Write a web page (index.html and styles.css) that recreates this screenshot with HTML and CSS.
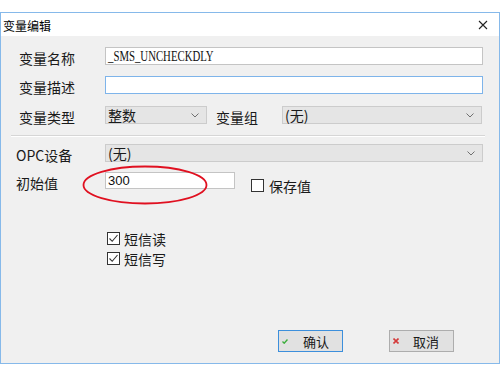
FILE: index.html
```html
<!DOCTYPE html>
<html lang="zh">
<head>
<meta charset="utf-8">
<title>变量编辑</title>
<link rel="stylesheet" href="styles.css">
</head>
<body>
<div class="window">
  <div class="titlebar">
    <span class="title">变量编辑</span>
    <svg class="close" width="10" height="10" viewBox="0 0 10 10"><path d="M1 1 L9 9 M9 1 L1 9" stroke="#222" stroke-width="1.1" fill="none"/></svg>
  </div>
  <div class="body">
    <div class="row r1">
      <span class="label">变量名称</span>
      <div class="input wide serif"><span class="narrow">_SMS_UNCHECKDLY</span></div>
    </div>
    <div class="row r2">
      <span class="label">变量描述</span>
      <div class="input wide focus"></div>
    </div>
    <div class="row r3">
      <span class="label">变量类型</span>
      <div class="combo c-type"><span>整数</span><svg class="chev" width="8" height="5" viewBox="0 0 8 5"><path d="M0.5 0.5 L4 4 L7.5 0.5" stroke="#707070" fill="none"/></svg></div>
      <span class="label-inline">变量组</span>
      <div class="combo c-group"><span>(无)</span><svg class="chev" width="8" height="5" viewBox="0 0 8 5"><path d="M0.5 0.5 L4 4 L7.5 0.5" stroke="#707070" fill="none"/></svg></div>
    </div>
    <div class="sep"></div>
    <div class="row r4">
      <span class="label alt">OPC设备</span>
      <div class="combo wide"><span>(无)</span><svg class="chev" width="8" height="5" viewBox="0 0 8 5"><path d="M0.5 0.5 L4 4 L7.5 0.5" stroke="#707070" fill="none"/></svg></div>
    </div>
    <div class="row r5">
      <span class="label alt">初始值</span>
      <div class="input short sans">300</div>
      <div class="check save"><span class="box"></span><span class="ctext">保存值</span></div>
    </div>
    <div class="checks">
      <div class="check"><span class="box"><svg width="11" height="11" viewBox="0 0 11 11"><path d="M1.5 5.5 L4.2 8.3 L9.5 2" stroke="#333" stroke-width="1.1" fill="none"/></svg></span><span class="ctext">短信读</span></div>
      <div class="check"><span class="box"><svg width="11" height="11" viewBox="0 0 11 11"><path d="M1.5 5.5 L4.2 8.3 L9.5 2" stroke="#333" stroke-width="1.1" fill="none"/></svg></span><span class="ctext">短信写</span></div>
    </div>
    <div class="buttons">
      <div class="btn default"><svg class="bicon" width="6" height="5" viewBox="0 0 6 5"><path d="M0.5 2.5 L2.2 4.2 L5.5 0.5" stroke="#3cae3c" stroke-width="1.4" fill="none"/></svg><span>确认</span></div>
      <div class="btn cancel"><svg class="bicon" width="6" height="6" viewBox="0 0 6 6"><path d="M0.5 0.5 L5.5 5.5 M5.5 0.5 L0.5 5.5" stroke="#d43a3a" stroke-width="1.6" fill="none"/></svg><span>取消</span></div>
    </div>
    <svg class="mark" width="126" height="40" viewBox="0 0 126 40"><ellipse cx="63" cy="20" rx="61.5" ry="18.5" fill="none" stroke="#e01020" stroke-width="1.8"/></svg>
  </div>
</div>
</body>
</html>
```

FILE: styles.css
```css
* { box-sizing: border-box; }
html, body { margin: 0; padding: 0; background: #ffffff; }
body {
  width: 500px;
  height: 365px;
  padding-top: 12px;
  font-family: "Liberation Serif", "Noto Sans CJK SC", serif;
  color: #1a1a1a;
  overflow: hidden;
}
.window {
  width: 500px;
  height: 352px;
  border: 1px solid #86b9ea;
  display: flex;
  flex-direction: column;
}
.titlebar {
  height: 23px;
  flex: none;
  background: #ffffff;
  display: flex;
  align-items: center;
  justify-content: space-between;
  padding-left: 2px;
  padding-right: 11px;
}
.title {
  font-family: "Noto Sans CJK SC", sans-serif;
  font-size: 12px;
  line-height: 14px;
  color: #000;
  margin-top: 2px;
}
.close { display: block; }
.body {
  flex: 1;
  background: #f0f0f0;
  position: relative;
}
.row {
  display: flex;
  align-items: center;
  height: 18px;
}
.label {
  width: 104px;
  height: 18px;
  padding-left: 18px;
  font-family: "Noto Sans CJK SC", sans-serif;
  font-size: 14px;
  line-height: 23px;
  color: #1a1a1a;
}
.label.alt { padding-left: 15px; }
.label-inline {
  font-family: "Noto Sans CJK SC", sans-serif;
  font-size: 14px;
  height: 18px;
  line-height: 23px;
  margin-left: 9px;
  width: 66px;
}
.input {
  height: 18px;
  background: #ffffff;
  border: 1px solid #c4c4c4;
  padding-left: 2px;
  font-size: 13px;
  line-height: 16px;
  color: #111;
}
.input.focus { border-color: #7eb4ea; }
.input.serif {
  font-family: "Liberation Serif", serif;
  font-size: 14px;
  line-height: 17px;
}
.narrow {
  display: inline-block;
  transform: scaleX(0.77);
  transform-origin: left center;
  white-space: nowrap;
}
.input.sans {
  font-family: "Liberation Sans", sans-serif;
  font-size: 13px;
  height: 17px;
  line-height: 15px;
}
.wide { width: 378px; }
.short { width: 130px; }
.combo {
  height: 18px;
  background: #e5e5e5;
  border: 1px solid #cccccc;
  display: flex;
  align-items: center;
  justify-content: space-between;
  padding-left: 2px;
  padding-right: 7px;
  font-family: "Noto Sans CJK SC", sans-serif;
  font-size: 14px;
  line-height: 16px;
  color: #1a1a1a;
}
.c-type { width: 102px; }
.c-group { width: 200px; }
.chev { display: block; }
.r1 { margin-top: 11px; }
.r2 { margin-top: 11px; }
.r3 { margin-top: 12px; }
.sep {
  margin: 11px 14px 0 10px;
  height: 2px;
  border-top: 1px solid #d6d6d6;
  border-bottom: 1px solid #ffffff;
}
.r4 { margin-top: 7px; }
.r5 { margin-top: 10px; height: 17px; align-items: flex-start; }
.check {
  display: flex;
  align-items: center;
  font-family: "Noto Sans CJK SC", sans-serif;
  font-size: 14px;
  line-height: 16px;
}
.box {
  width: 13px;
  height: 13px;
  flex: none;
  border: 1px solid #333333;
  background: #ffffff;
  display: flex;
  align-items: center;
  justify-content: center;
}
.box svg { display: block; }
.ctext { margin-left: 5px; margin-top: 1px; }
.check.save { margin-left: 16px; margin-top: 6px; height: 14px; }
.checks {
  margin-top: 42px;
  padding-left: 106px;
  display: flex;
  flex-direction: column;
  gap: 6px;
}
.checks .check { height: 14px; }
.checks .ctext { margin-left: 4px; }
.buttons {
  margin-top: 65px;
  display: flex;
  padding-left: 277px;
  gap: 46px;
}
.btn {
  width: 65px;
  height: 22px;
  background: #e1e1e1;
  border: 1px solid #adadad;
  display: flex;
  align-items: center;
  font-family: "Noto Sans CJK SC", sans-serif;
  font-size: 13px;
  line-height: 15px;
  color: #1a1a1a;
  padding-left: 3px;
}
.btn.default { border-color: #3c8fdc; }
.bicon { display: block; margin-left: 0; margin-right: 15px; }
.btn.cancel .bicon { margin-right: 14px; }
.mark {
  position: absolute;
  left: 81px;
  top: 129px;
}
```
